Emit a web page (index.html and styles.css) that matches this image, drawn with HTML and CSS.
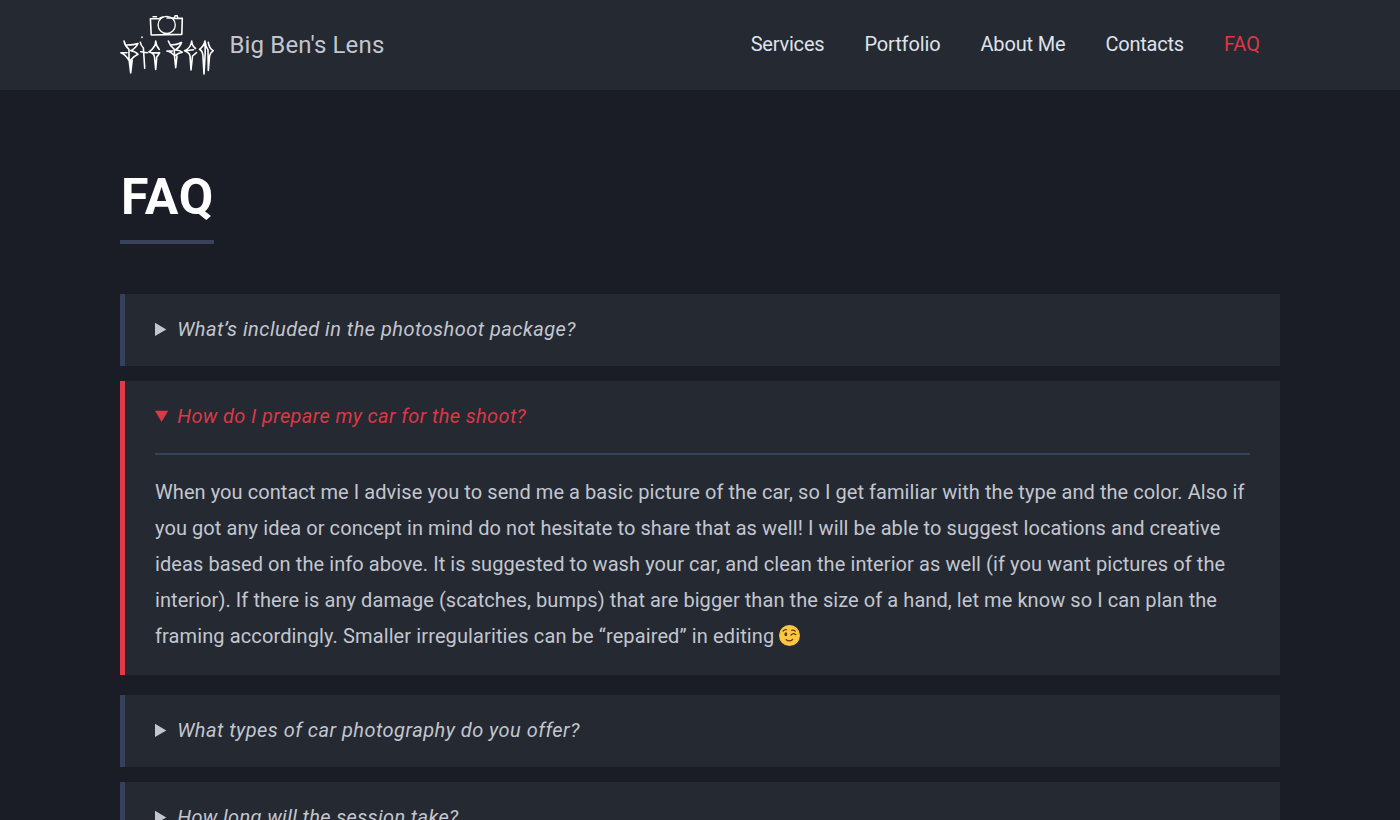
FILE: index.html
```html
<!DOCTYPE html>
<html lang="en">
<head>
<meta charset="utf-8">
<title>FAQ - Big Ben's Lens</title>
<link rel="stylesheet" href="styles.css">
</head>
<body>
<header class="site-header">
  <div class="container header-row">
    <a class="brand">
      <svg class="logo" viewBox="0 0 94 62" fill="none" stroke="#fff" stroke-linecap="round" stroke-linejoin="round">
        <path d="M30.4 4.8H40M53 4.5L62.3 4.3 61.8 20.4 31.2 21 30.4 4.8M40 4L43 3M47 4H54" stroke-width="1.6"/>
        <path d="M33 2.8h3.5M54.5 4l.5-2.2h2.3l.5 2.2" stroke-width="1.4"/>
        <circle cx="46.7" cy="10.9" r="8.6" stroke-width="1.3"/>
        <g stroke-width="1.6">
          <path d="M4 27Q5 32 9 35.3L9 45 10.7 59 12.2 46M10.3 46L10.9 54M7 31Q14 31 18 29.5 16 34 10.7 36.7 15 37 18 40.3 14 42 9.5 47 5 40 .9 38.7L7 38.7"/>
          <path d="M22 23.1v.3M20.3 28.3Q20.5 31 23.4 34L24.7 54.3M20.7 37.7L27.3 38.7"/>
          <path d="M35.7 27Q36 33 28.9 38 34 39 34.5 43L35.7 55.5 36.8 43 39.7 38.9 32 38.7M35.7 27Q36 32 39.3 35.5"/>
          <path d="M48.3 27Q50 32 54.3 35.3L54.5 42 55.7 53.7 57 42M50.5 31Q57 31 61.5 28.5 60 33 55.5 36 60 36 62.3 38.3 58 39 54.7 42 51 37.5 46.9 37L52.5 37"/>
          <path d="M71.7 27Q71 34 64.5 36.7 69.5 38.5 70 42L71 56 72.5 42 76.5 38.6M66 36.7L73.5 35.8M71.7 27Q72 32 75.5 34.5"/>
          <path d="M85 27Q84 32 79.5 35.3 82.5 37 82.9 41L84 60 85.2 39.3 85 27Q85.5 32 88 36L88.3 56.5 89.5 42.7Q90 39 93.2 36.7 89 34 88.3 28.3"/>
        </g>
      </svg>
      <span class="brand-name">Big Ben's Lens</span>
    </a>
    <nav class="nav">
      <a class="l1">Services</a><a class="l2">Portfolio</a><a class="l3">About Me</a><a class="l4">Contacts</a><a class="active">FAQ</a>
    </nav>
  </div>
</header>
<main class="container">
  <h1 class="title"><span>FAQ</span></h1>
  <section class="faq">
    <details class="item"><summary><span class="q q1">What’s included in the photoshoot package?</span></summary></details>
    <details class="item" open><summary><span class="q q2">How do I prepare my car for the shoot?</span></summary>
      <p class="answer"><span class="a1">When you contact me I advise you to send me a basic picture of the car, so I get familiar with the type and the color. Also if</span><br>
      <span class="a2">you got any idea or concept in mind do not hesitate to share that as well! I will be able to suggest locations and creative</span><br>
      <span class="a3">ideas based on the info above. It is suggested to wash your car, and clean the interior as well (if you want pictures of the</span><br>
      <span class="a4">interior). If there is any damage (scatches, bumps) that are bigger than the size of a hand, let me know so I can plan the</span><br>
      <span class="a5">framing accordingly. Smaller irregularities can be “repaired” in editing</span><svg class="wink" viewBox="0 0 20 20" fill="none" stroke="#5b3a10" stroke-linecap="round"><circle cx="10" cy="10" r="10" fill="#fdc640" stroke="none"/><ellipse cx="6.5" cy="8.8" rx="1.3" ry="1.8" fill="#5b3a10" stroke="none"/><path d="M3.8 5.8Q5 4.2 7 4.4M12 5Q14 4.3 15.5 5.8M11.5 9.5Q13.7 7.2 16 9.2M6.8 14Q10 16.5 13 13.8" stroke-width="1.2"/></svg></p>
    </details>
    <details class="item"><summary><span class="q q3">What types of car photography do you offer?</span></summary></details>
    <details class="item"><summary><span class="q q4">How long will the session take?</span></summary></details>
  </section>
</main>
</body>
</html>
```
FILE: styles.css
```css
* { box-sizing: border-box; }
body { margin: 0; background: #1a1d26; color: #c3c6cf; font: 20px/36px Roboto, sans-serif; height: 820px; overflow: hidden; }
.container { width: 1160px; margin: 0 auto; }
.site-header { height: 90px; background: #242932; }
.header-row { height: 90px; display: flex; justify-content: space-between; align-items: center; }
.brand { display: flex; align-items: center; gap: 15.5px; }
.logo { width: 94px; height: 62px; }
.brand-name { font-size: 24px; letter-spacing: 0.15px; }
.nav { display: flex; gap: 40px; padding: 0 20px 2px 0; color: #dfe2ea; }
.nav .active { color: #dc3846; }
.l1 { letter-spacing: -0.2px; }
.l2 { letter-spacing: -0.13px; }
.l3 { letter-spacing: -0.16px; }
.l4 { letter-spacing: -0.22px; }
.title { margin: 70px 0 50px; display: flex; font-size: 50px; line-height: 70px; color: #fff; }
.title span { border-bottom: 4px solid #3a435c; padding: 2px 0 8px 1px; letter-spacing: 0.8px; }
.item { background: #242932; border-left: 5px solid #37415b; padding: 17px 30px 19px; margin-bottom: 15px; white-space: nowrap; }
.item[open] { border-color: #e13b4a; padding-bottom: 21px; margin-bottom: 20px; }
summary { height: 36px; font-style: italic; }
.item[open] summary { color: #dc3846; }
.q { margin-left: 1px; }
.q1 { letter-spacing: 0.46px; }
.q2 { letter-spacing: 0.36px; }
.q3 { letter-spacing: 0.47px; }
.q4 { letter-spacing: 0.36px; }
.answer { margin: 19px 0 0; padding-top: 19px; border-top: 2px solid #36435a; }
.a1 { letter-spacing: 0.065px; }
.a2 { letter-spacing: 0.083px; }
.a3 { letter-spacing: 0.078px; }
.a4 { letter-spacing: 0.068px; }
.a5 { letter-spacing: 0.115px; }
.wink { width: 21px; height: 21px; margin-left: 5px; vertical-align: -3px; }
```
